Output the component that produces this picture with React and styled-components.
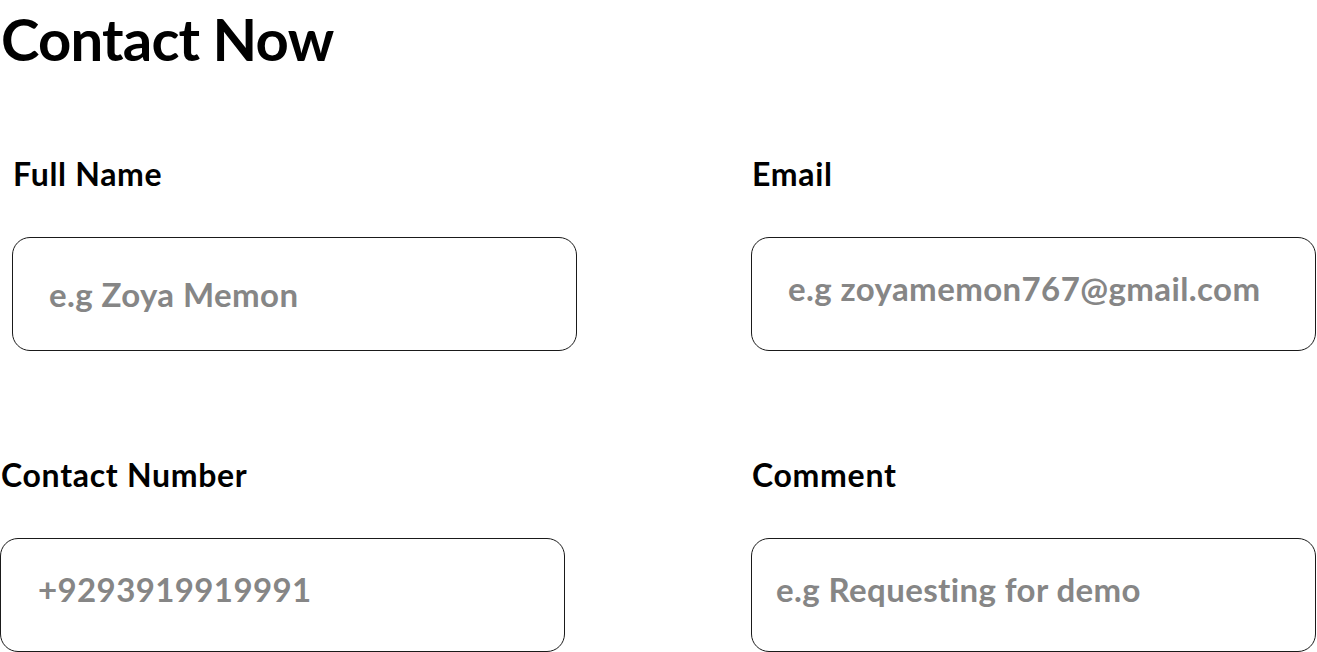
import React from 'react';
import styled, { createGlobalStyle } from 'styled-components';

const GlobalStyle = createGlobalStyle`
  body {
    margin: 0;
    background: #fff;
    font-family: Lato, "Noto Sans", sans-serif;
    color: #000;
  }
`;

const Page = styled.div`
  width: 1317px;
  height: 652px;
  overflow: hidden;
`;

const Title = styled.h1`
  margin: 0;
  padding: 6px 0 0 1px;
  font-size: 58px;
  line-height: 66px;
  font-weight: 700;
  letter-spacing: -0.8px;
`;

const Form = styled.form`
  display: grid;
  grid-template-columns: 565px 565px;
  column-gap: 186px;
  row-gap: 106px;
  margin-top: 84px;
`;

const Field = styled.label`
  display: flex;
  flex-direction: column;
  gap: 45px;
  margin-left: ${(p) => p.$indent || 0}px;
`;

const LabelText = styled.span`
  font-size: 32px;
  line-height: 36px;
  font-weight: 700;
  letter-spacing: 0.7px;
  padding-left: ${(p) => p.$shift || 0}px;
`;

const Input = styled.input`
  box-sizing: border-box;
  width: 565px;
  height: 114px;
  border: 1px solid #1a1a1a;
  border-radius: 18px;
  padding: 0 0 ${(p) => p.$lift || 0}px ${(p) => p.$pad}px;
  font-family: inherit;
  font-size: 33px;
  font-weight: 700;
  letter-spacing: 0.4px;
  color: #222;
  background: #fff;
  outline: none;

  &::placeholder {
    color: #868686;
  }
`;

const fields = [
  { label: 'Full Name', placeholder: 'e.g Zoya Memon', indent: 12, shift: 1, pad: 36, lift: 0 },
  { label: 'Email', placeholder: 'e.g zoyamemon767@gmail.com', indent: 0, shift: 1, pad: 36, lift: 12 },
  { label: 'Contact Number', placeholder: '+9293919919991', indent: 0, shift: 1, pad: 37, lift: 13 },
  { label: 'Comment', placeholder: 'e.g Requesting for demo', indent: 0, shift: 1, pad: 24, lift: 13 },
];

const App = () => (
  <Page>
    <GlobalStyle />
    <Title>Contact Now</Title>
    <Form onSubmit={(e) => e.preventDefault()}>
      {fields.map((f) => (
        <Field key={f.label} $indent={f.indent}>
          <LabelText $shift={f.shift}>{f.label}</LabelText>
          <Input placeholder={f.placeholder} $pad={f.pad} $lift={f.lift} />
        </Field>
      ))}
    </Form>
  </Page>
);

export default App;
